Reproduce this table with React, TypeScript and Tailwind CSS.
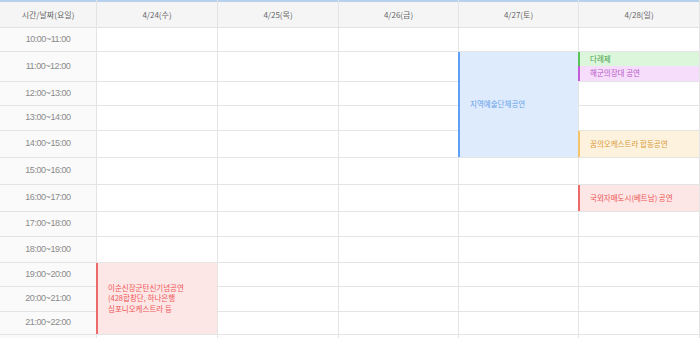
import React from 'react';

type Slot = { label: string; h: string };

const slots: Slot[] = [
  { label: '10:00~11:00', h: 'h-[24px]' },
  { label: '11:00~12:00', h: 'h-[30px]' },
  { label: '12:00~13:00', h: 'h-[24px]' },
  { label: '13:00~14:00', h: 'h-[25px]' },
  { label: '14:00~15:00', h: 'h-[27px]' },
  { label: '15:00~16:00', h: 'h-[27px]' },
  { label: '16:00~17:00', h: 'h-[27px]' },
  { label: '17:00~18:00', h: 'h-[25px]' },
  { label: '18:00~19:00', h: 'h-[26px]' },
  { label: '19:00~20:00', h: 'h-[24px]' },
  { label: '20:00~21:00', h: 'h-[25px]' },
  { label: '21:00~22:00', h: 'h-[23px]' },
];

const font = "font-['Noto_Sans_CJK_KR','Noto_Sans',sans-serif]";

function Header({ children, className = '' }: { children: React.ReactNode; className?: string }) {
  return (
    <div
      className={`h-[28px] flex items-center justify-center bg-[#f5f5f5] border-t-2 border-t-[#b7d0ec] border-b border-b-[#e2e2e2] text-[8px] text-[#666] ${className}`}
    >
      {children}
    </div>
  );
}

function Cell({ h, children, className = '' }: { h: string; children?: React.ReactNode; className?: string }) {
  return <div className={`${h} border-b border-[#e4e4e4] flex flex-col ${className}`}>{children}</div>;
}

function Event({ tone, children, className = '' }: { tone: string; children: React.ReactNode; className?: string }) {
  return <div className={`flex items-center pl-[10px] border-l-2 text-[7.5px] leading-[10.5px] ${tone} ${className}`}>{children}</div>;
}

function DayColumn({ title, width, children, last = false }: { title: string; width: string; children: React.ReactNode; last?: boolean }) {
  return (
    <div className={`${width} flex flex-col border-l border-[#e4e4e4] ${last ? 'border-r' : ''}`}>
      <Header>{title}</Header>
      {children}
    </div>
  );
}

function Empty({ from, to }: { from: number; to: number }) {
  return (
    <>
      {slots.slice(from, to).map((s) => (
        <Cell key={s.label} h={s.h} />
      ))}
    </>
  );
}

const blue = 'bg-[#deebfd] border-[#5f9ff5] text-[#66a2ea]';
const green = 'bg-[#dcf6dc] border-[#59c259] text-[#48a048]';
const purple = 'bg-[#f6ddfb] border-[#c65bd8] text-[#b65ac6]';
const orange = 'bg-[#fdf2de] border-[#f5c46a] text-[#d89c3a]';
const red = 'bg-[#fde6e6] border-[#ec6a6a] text-[#ee5656]';

export default function App() {
  return (
    <div className={`w-[700px] h-[338px] bg-white flex ${font}`}>
      <div className="w-[96px] flex flex-col bg-[#fafafa]">
        <Header>시간/날짜(요일)</Header>
        {slots.map((s) => (
          <Cell key={s.label} h={s.h} className="items-center justify-center">
            <span className="font-['Liberation_Sans',sans-serif] text-[9px] tracking-[-0.45px] text-[#8a8a8a]">{s.label}</span>
          </Cell>
        ))}
      </div>

      <DayColumn title="4/24(수)" width="w-[121px]">
        <Empty from={0} to={9} />
        <Cell h="h-[72px]">
          <Event tone={red} className="flex-1 -ml-px">
            <div>
              이순신장군탄신기념공연
              <br />
              (428합창단, 하나은행
              <br />
              심포니오케스트라 등
            </div>
          </Event>
        </Cell>
      </DayColumn>

      <DayColumn title="4/25(목)" width="w-[121px]">
        <Empty from={0} to={12} />
      </DayColumn>

      <DayColumn title="4/26(금)" width="w-[120px]">
        <Empty from={0} to={12} />
      </DayColumn>

      <DayColumn title="4/27(토)" width="w-[120px]">
        <Empty from={0} to={1} />
        <Cell h="h-[106px]">
          <Event tone={blue} className="flex-1 -ml-px">지역예술단체공연</Event>
        </Cell>
        <Empty from={5} to={12} />
      </DayColumn>

      <DayColumn title="4/28(일)" width="w-[122px]" last>
        <Empty from={0} to={1} />
        <Cell h="h-[30px]">
          <Event tone={green} className="h-[14px] -ml-px">다례제</Event>
          <Event tone={purple} className="h-[15px] -ml-px">해군의장대 공연</Event>
        </Cell>
        <Empty from={2} to={4} />
        <Cell h="h-[27px]">
          <Event tone={orange} className="flex-1 -ml-px">꿈의오케스트라 합동공연</Event>
        </Cell>
        <Empty from={5} to={6} />
        <Cell h="h-[27px]">
          <Event tone={red} className="flex-1 -ml-px">국외자매도시(베트남) 공연</Event>
        </Cell>
        <Empty from={7} to={12} />
      </DayColumn>
    </div>
  );
}
